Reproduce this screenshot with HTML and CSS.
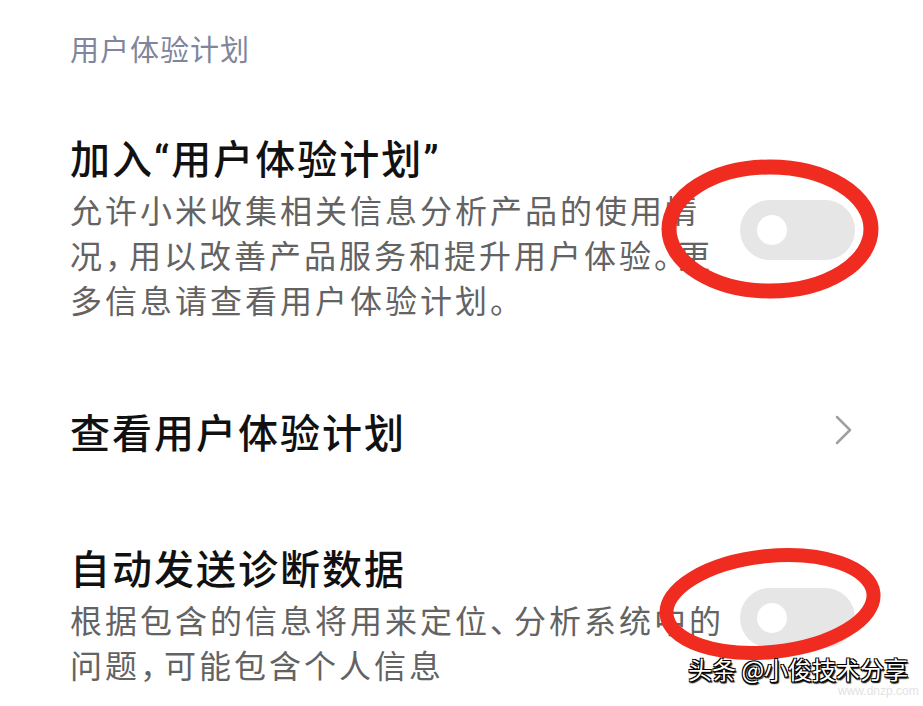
FILE: index.html
```html
<!DOCTYPE html>
<html lang="zh-CN">
<head>
    <meta charset="UTF-8">
    <meta name="viewport" content="width=device-width, initial-scale=1.0">
    <title>用户体验计划</title>
    <link rel="stylesheet" href="styles.css">
</head>
<body>
    <div class="page">
        <div class="group-title">用户体验计划</div>
        <div class="list">
            <div class="item">
                <div class="item-text">
                    <div class="item-title">加入“用户体验计划”</div>
                    <div class="item-desc">允许小米收集相关信息分析产品的使用情况<span class="punct">，</span>用以改善产品服务和提升用户体验<span class="punct">。</span>更多信息请查看用户体验计划。</div>
                </div>
                <span class="switch"><span class="knob"></span></span>
            </div>
            <div class="item">
                <div class="item-text">
                    <div class="item-title">查看用户体验计划</div>
                </div>
                <svg class="arrow" width="18" height="30" viewBox="0 0 18 30">
                    <polyline points="2,2 15,15 2,28" fill="none" stroke="#a0a0a0" stroke-width="2.5" stroke-linecap="round" stroke-linejoin="round"/>
                </svg>
            </div>
            <div class="item">
                <div class="item-text">
                    <div class="item-title">自动发送诊断数据</div>
                    <div class="item-desc">根据包含的信息将用来定位<span class="punct">、</span>分析系统中的问题<span class="punct">，</span>可能包含个人信息</div>
                </div>
                <span class="switch"><span class="knob"></span></span>
            </div>
        </div>

        <!-- 红圈标注 -->
        <svg class="marks" width="923" height="706" viewBox="0 0 923 706">
            <ellipse cx="770" cy="229" rx="101" ry="62" fill="none" stroke="#f02c21" stroke-width="15"/>
            <ellipse cx="770" cy="604" rx="104" ry="48" fill="none" stroke="#f02c21" stroke-width="14" transform="rotate(-6 770 604)"/>
        </svg>

        <div class="watermark">头条 @小俊技术分享</div>
        <div class="watermark-site">www.dnzp.com</div>
    </div>
</body>
</html>
```

FILE: styles.css
```css
html, body{
    margin: 0;
    background: #ffffff;
}
.page{
    position: relative;
    width: 923px;
    height: 706px;
    overflow: hidden;
    padding: 31px 68px 0 70px;
    box-sizing: border-box;
    font-family: Roboto, "Noto Sans CJK SC", sans-serif;
}
.group-title{
    font-size: 29px;
    line-height: 40px;
    letter-spacing: 1px;
    color: #7f869c;
}
.list{
    display: flex;
    flex-direction: column;
    gap: 84px;
    margin-top: 64px
}
.item{
    display: flex;
    align-items: center;
    justify-content: space-between;
}
.item-text{
    width: 660px;
}
.item-title{
    font-size: 40px;
    line-height: 52px;
    letter-spacing: 2px;
    font-weight: 500;
    color: #111111;
}
.item-desc{
    margin-top: 3px;
    font-size: 32px;
    line-height: 45px;
    letter-spacing: 3px;
    color: #636363;
}
/* 标点压缩成半角 */
.punct{
    font-feature-settings: "halt";
    margin-right: 5px;
}
.switch{
    position: relative;
    display: flex;
    align-items: center;
    width: 115px;
    height: 60px;
    border-radius: 30px;
    background: #e6e6e6;
    flex-shrink: 0;
}
.knob{
    width: 30px;
    height: 30px;
    margin-left: 17px;
    border-radius: 50%;
    background: #ffffff;
}
.arrow{
    margin-right: 2px;
    transform: translateY(-5px);
}
.marks{
    position: absolute;
    left: 0;
    top: 0;
    pointer-events: none;
}
.watermark{
    position: absolute;
    left: 688px;
    top: 651px;
    font-size: 24px;
    line-height: 36px;
    color: #ffffff;
    font-family: "Noto Sans CJK SC", sans-serif;
    text-shadow: 1px 1px 0 #000, -1px -1px 0 #000, 1px -1px 0 #000, -1px 1px 0 #000, 2px 2px 1px #222, 0 2px 1px #222;
}
.watermark-site{
    position: absolute;
    left: 838px;
    top: 684px;
    font-size: 12px;
    color: #e2e2e2;
    font-family: "Liberation Sans", sans-serif;
}
```
